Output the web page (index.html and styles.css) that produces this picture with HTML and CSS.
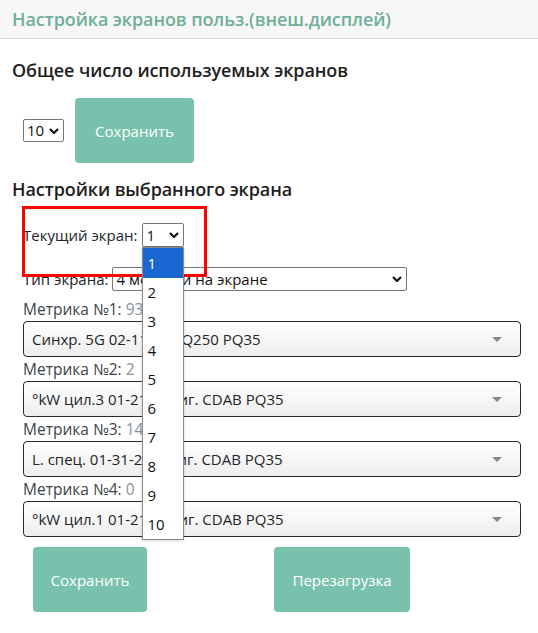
FILE: index.html
```html
<!DOCTYPE html>
<html lang="ru">
<head>
<meta charset="utf-8">
<title>Настройка экранов</title>
<link rel="stylesheet" href="styles.css">
</head>
<body>
<header class="topbar">
  <h1 class="topbar-title">Настройка экранов польз.(внеш.дисплей)</h1>
</header>
<main class="content">
  <h2 class="section-title">Общее число используемых экранов</h2>
  <div class="count-row">
    <span class="native-select native-select--small">10<svg class="chev" viewBox="0 0 10 6" width="10" height="6"><path d="M1 1 L5 5 L9 1" fill="none" stroke="#111" stroke-width="2.2"/></svg></span>
    <button class="btn btn--top">Сохранить</button>
  </div>

  <h2 class="section-title section-title--second">Настройки выбранного экрана</h2>
  <div class="screen-form">
    <div class="current-row">
      <span class="field-label">Текущий экран:</span>
      <span class="select-holder">
        <span class="native-select native-select--current">1<svg class="chev" viewBox="0 0 10 6" width="10" height="6"><path d="M1 1 L5 5 L9 1" fill="none" stroke="#111" stroke-width="2.2"/></svg></span>
        <ul class="dropdown">
          <li class="dropdown-item dropdown-item--active">1</li>
          <li class="dropdown-item">2</li>
          <li class="dropdown-item">3</li>
          <li class="dropdown-item">4</li>
          <li class="dropdown-item">5</li>
          <li class="dropdown-item">6</li>
          <li class="dropdown-item">7</li>
          <li class="dropdown-item">8</li>
          <li class="dropdown-item">9</li>
          <li class="dropdown-item">10</li>
        </ul>
      </span>
      <span class="highlight-box"></span>
    </div>

    <div class="type-row">
      <span class="field-label">Тип экрана:</span>
      <span class="native-select native-select--wide">4 метрики на экране<svg class="chev" viewBox="0 0 10 6" width="10" height="6"><path d="M1 1 L5 5 L9 1" fill="none" stroke="#111" stroke-width="2.2"/></svg></span>
    </div>

    <div class="metrics">
      <div class="metric">
        <div class="metric-label">Метрика №1: <span class="metric-value">93</span></div>
        <div class="combo"><span class="combo-text">Синхр. 5G 02-11 Ген.Q250 PQ35</span><span class="combo-arrow"></span></div>
      </div>
      <div class="metric">
        <div class="metric-label">Метрика №2: <span class="metric-value">2</span></div>
        <div class="combo"><span class="combo-text">°kW цил.3 01-211 Двиг. CDAB PQ35</span><span class="combo-arrow"></span></div>
      </div>
      <div class="metric">
        <div class="metric-label">Метрика №3: <span class="metric-value">14</span></div>
        <div class="combo"><span class="combo-text">L. спец. 01-31-21&nbsp; Двиг. CDAB PQ35</span><span class="combo-arrow"></span></div>
      </div>
      <div class="metric">
        <div class="metric-label">Метрика №4: <span class="metric-value">0</span></div>
        <div class="combo"><span class="combo-text">°kW цил.1 01-211 Двиг. CDAB PQ35</span><span class="combo-arrow"></span></div>
      </div>
    </div>

    <div class="actions">
      <div class="actions-cell actions-cell--left"><button class="btn btn--save">Сохранить</button></div>
      <div class="actions-cell actions-cell--right"><button class="btn btn--reload">Перезагрузка</button></div>
    </div>
  </div>
</main>
</body>
</html>
```

FILE: styles.css
```css
* { box-sizing: border-box; }
html, body {
  margin: 0;
  padding: 0;
  background: #fff;
  font-family: "Open Sans", "Noto Sans", sans-serif;
  color: #212529;
}
.topbar {
  height: 39px;
  background: #f7f7f7;
  border-bottom: 1px solid #dcdcdc;
  display: flex;
  align-items: center;
  padding-left: 12px;
}
.topbar-title {
  margin: 0;
  font-size: 18px;
  font-weight: 600;
  color: #6fae9c;
  letter-spacing: -0.1px;
}
.content {
  padding: 19px 17px 0 12px;
}
.section-title {
  margin: 0;
  font-size: 18px;
  font-weight: 600;
  color: #1e1e1e;
  line-height: 24px;
  letter-spacing: -0.1px;
}
.section-title--second {
  margin-top: 14px;
}
.count-row {
  display: flex;
  align-items: center;
  gap: 11px;
  margin-top: 16px;
  padding-left: 11px;
}
.native-select {
  display: inline-flex;
  align-items: center;
  justify-content: space-between;
  height: 23px;
  border: 1px solid #767676;
  border-radius: 2px;
  background: #fff;
  font-size: 15px;
  color: #111;
  padding: 0 4px 0 3px;
  line-height: 1;
}
.native-select--small { width: 41px; }
.native-select--current { width: 42px; height: 24px; }
.native-select--wide { width: 295px; height: 24px; }
.chev { flex: none; }
.btn {
  border: none;
  border-radius: 4px;
  background: #78c2ad;
  color: #fff;
  font-family: inherit;
  font-size: 15px;
  height: 65px;
  cursor: pointer;
}
.btn--top { width: 119px; }
.btn--save { width: 114px; }
.btn--reload { width: 136px; }
.screen-form {
  padding-left: 11px;
  margin-top: 22px;
}
.field-label {
  font-size: 15px;
  color: #212529;
}
.current-row {
  position: relative;
  display: flex;
  align-items: center;
  gap: 5px;
  height: 24px;
}
.select-holder {
  position: relative;
  display: inline-block;
  z-index: 3;
}
.dropdown {
  position: absolute;
  left: 0;
  top: 24px;
  width: 42px;
  margin: 0;
  padding: 0;
  list-style: none;
  background: #fff;
  border: 1px solid #8a8a8a;
  box-shadow: 0 1px 3px rgba(0,0,0,0.15);
}
.dropdown-item {
  height: 29px;
  line-height: 29px;
  padding-left: 4px;
  font-size: 15px;
  color: #111;
}
.dropdown-item--active {
  background: #1967d2;
  color: #fff;
  height: 30px;
  line-height: 30px;
}
.highlight-box {
  position: absolute;
  left: -1px;
  top: -17px;
  width: 185px;
  height: 71px;
  border: 3px solid #f00;
  z-index: 2;
  pointer-events: none;
}
.type-row {
  display: flex;
  align-items: center;
  gap: 4px;
  margin-top: 20px;
  height: 24px;
}
.metrics {
  display: flex;
  flex-direction: column;
  margin-top: 6px;
}
.metric {
  display: flex;
  flex-direction: column;
}
.metric-label {
  font-size: 15.5px;
  line-height: 24px;
  height: 24px;
  color: #3d4349;
}
.metric-value { color: #8a9299; }
.combo {
  display: flex;
  align-items: center;
  justify-content: space-between;
  height: 36px;
  border: 1px solid #2a2a2a;
  border-radius: 4px;
  background: linear-gradient(#ffffff 0%, #eeeeee 100%);
  padding: 0 18px 0 8px;
  font-size: 15px;
  color: #212529;
  white-space: nowrap;
  overflow: hidden;
}
.combo-text { line-height: 1; }
.combo-arrow {
  width: 0;
  height: 0;
  border-left: 5px solid transparent;
  border-right: 5px solid transparent;
  border-top: 5px solid #888;
}
.actions {
  display: grid;
  grid-template-columns: 1fr 1fr;
  margin-top: 10px;
}
.actions-cell--left { padding-left: 10px; }
.actions-cell--right { padding-left: 2px; }
```
